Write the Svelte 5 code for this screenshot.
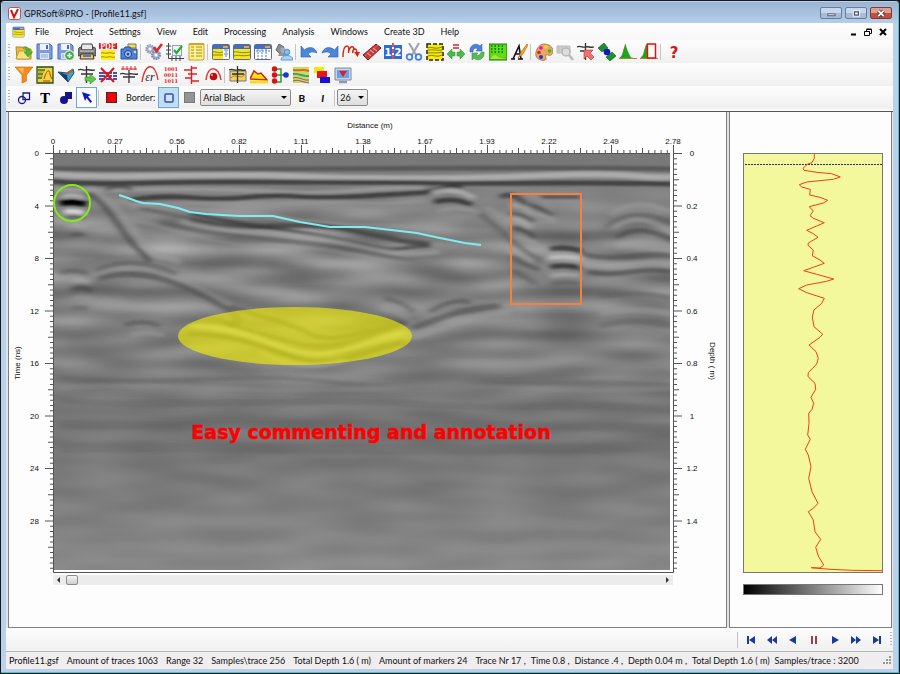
<script>
  const menus = ['File', 'Project', 'Settings', 'View', 'Edit', 'Processing', 'Analysis', 'Windows', 'Create 3D', 'Help'];

  // Shared icon parts, all drawn on an 18 x 18 grid
  const floppy = `<path d="M1 1h13l2 2v13H1z" fill="#7d9be0" stroke="#4a68b8"/><path d="M4 1h9v6H4z" fill="#eef3fc"/><path d="M10 2h2v4h-2z" fill="#4a68b8"/><path d="M4 10h9v6H4z" fill="#dfe8f8"/><path d="M5 12h7M5 14h7" stroke="#8aa3d6"/>`;
  const frame = `<rect x=".5" y="1.500" width="17" height="15" rx="1" fill="#fff" stroke="#5a6a90"/><path d="M1 2h16v4H1z" fill="#3f6ec8"/><path d="M11 3h5v2h-5z" fill="#f2a040"/>`;
  const peak = `<path d="M0 15.500 3 12 5 5 6.500 1 8 6 10 11 12 14.500 17.500 15.500z" fill="#1da51d"/><path d="M0 15.500h18" stroke="#a08a40"/><path d="m6.500 1-3 11" stroke="#8a7a20" stroke-width=".6"/>`;
  const crosshair = `<path d="M0 4c4-2 5 1 8 0s6 1 9 0M3 8h12M8.500 0v17" fill="none" stroke="#333" stroke-width="1.300"/>`;

  const open = `<path d="M1 4h6l2 2h7v10H2z" fill="#e8b93a" stroke="#b48a20"/><path d="m1 16 3-8h13l-3 8z" fill="#fbe38a" stroke="#c9a030"/><path d="M8 4c5-1 7 2 7 5h2.500L13 14 9 9h2.500c0-2-1-4-3.500-5z" fill="#4dbb2f" stroke="#2c8c1c" stroke-width=".5"/>`;
  const saveAs = `${floppy}<circle cx="12.500" cy="12.500" r="4.800" fill="#3cae3c" stroke="#fff"/><path d="M12.500 10v5M10 12.500h5" stroke="#fff" stroke-width="1.600"/>`;
  const print = `<path d="M4 1h10l1 6H3z" fill="#e8e8e8" stroke="#444"/><path d="M0 7c0-2 2-3 3-3l1 3h10l1-3c2 0 3 1 3 3v6H0z" fill="#777" stroke="#222" stroke-width=".6"/><path d="M2 8h14" stroke="#ddd"/><path d="M3 11h12l1 5H2z" fill="#f6c85a" stroke="#333"/><path d="M5 13h8" stroke="#4c78d0" stroke-width="2"/>`;
  const pdf = `<path d="M0 0h18v6H0z" fill="#f01414"/><text x="9" y="6" font-family="Liberation Serif, serif" font-weight="bold" font-size="8" text-anchor="middle" fill="#fff">PDF</text><path d="M2 7h14v10H2z" fill="#ffee1a"/><path d="M2 10c3-1 4 1 7 0s4 1 7 0M2 14c3-1 4 1 7 0s4 1 7 0" fill="none" stroke="#9c9000"/>`;
  const camera = `<path d="M8 1h8v4H8z" fill="#f2dc50" stroke="#777"/><path d="M1 6h3l1-2h5l1 2h6v10H1z" fill="#4c82dc" stroke="#2450a0"/><circle cx="8" cy="11" r="3.500" fill="#a8c8f8" stroke="#1c3c84"/><circle cx="8" cy="11" r="1.500" fill="#234a9c"/><circle cx="15" cy="9" r="1.200" fill="#ffe050"/>`;
  const gears = `<circle cx="5" cy="6" r="3.500" fill="#b8c2dc" stroke="#8d98b8" stroke-width="2.500" stroke-dasharray="1.500 .7"/><circle cx="5" cy="6" r="1.300" fill="#fff"/><circle cx="11" cy="12" r="3.800" fill="#aab6d4" stroke="#7d8ab0" stroke-width="2.500" stroke-dasharray="1.600 .7"/><circle cx="11" cy="12" r="1.500" fill="#fff"/><path d="m9 4 2.500 4L17 1" fill="none" stroke="#d92a2a" stroke-width="2.500"/>`;
  const validate = `<path d="M2.500 0v15.500H18M0 3h5M0 7h5M0 11h5M6 13v5M10 13v5M14 13v5" stroke="#444" fill="none"/><rect x="6.500" y="2.500" width="9" height="10" fill="#eef4ff" stroke="#8fa4c8"/><path d="m8 7 2.500 3L16 3" fill="none" stroke="#26ad26" stroke-width="2.200"/>`;
  const notes = `<path d="M2 1h15v15l-1 1H2z" fill="#fdf08c" stroke="#c8a428"/><path d="M4 4h3M9 4h6M4 7h3M9 7h6M4 10h3M9 10h6M4 13h3M9 13h6" stroke="#a58a20"/><path d="M2 1h15" stroke="#d9a520" stroke-width="2"/>`;
  const traceWindow = `${frame}<path d="M1 6h10v10H1z" fill="#f5e61e"/><path d="M1 9c3-1 5 2 10 0M1 12h10" stroke="#8c8200" fill="none"/><path d="M12 7h4M13 9h2M12 11h4M13 13h2" stroke="#4579d0"/>`;
  const profileWindow = `${frame}<path d="M1 6h16v10H1z" fill="#f5e61e"/><path d="M1 9c4-1 6 2 16 0M1 13c4-2 7 1 16-1" stroke="#8c8200" fill="none"/>`;
  const tableWindow = `${frame}<path d="M2 8h14M4 6v10M8 6v10M12 6v10" stroke="#4579d0" stroke-dasharray="2 1"/>`;
  const users = `<path d="m1 7 3-6 5 3-4 7z" fill="#8a8f96" stroke="#666"/><circle cx="8" cy="7" r="2.500" fill="#a9adb2"/><path d="M3 13c1-5 8-5 9 0z" fill="#92979c"/><circle cx="12" cy="9" r="2.800" fill="#84bff0" stroke="#5090d0"/><path d="M6 17c0-6 12-6 12 0z" fill="#a9d4f8" stroke="#5b9bd8"/>`;
  const undo = `<path d="M1 3v11h10L8 11c3-3 6-2 9-1C15 4 9 3 4.500 7z" fill="#4a86dc" stroke="#2c5fae" stroke-width=".6"/>`;
  const redo = `<path d="M17 3v11H7l3-3C7 8 4 9 1 10c2-6 8-7 12.500-3z" fill="#4a86dc" stroke="#2c5fae" stroke-width=".6"/>`;
  const wave = `<path d="M1 14C1 5 3 3 5 3s2 3 1.500 7C7 5 9 3 11 4s0 4-.5 6C11 5 15 4 15 11" fill="none" stroke="#d8230f" stroke-width="1.400"/><path d="m12 9 3.500 5L18 9z" fill="#d8230f"/>`;
  const ruler = `<path d="m0 12 13-11 5 4L5 17z" fill="#c43c3c" stroke="#7c1c1c"/><path d="m4 10 4 3M7 7l4 3M10 5l4 3" stroke="#f0b8b8"/><path d="m2 13 13-11" stroke="#e88080" stroke-dasharray="1 1"/>`;
  const split = `<path d="M0 2h8v14H0zM10 2h8v14h-8z" fill="#2f6bd8"/><text x="4" y="13" font-family="DejaVu Sans, sans-serif" font-weight="bold" font-size="10" text-anchor="middle" fill="#fff">1</text><text x="14" y="13" font-family="DejaVu Sans, sans-serif" font-weight="bold" font-size="10" text-anchor="middle" fill="#fff">2</text><path d="M9 0v18" stroke="#e01010" stroke-width="1.500" stroke-dasharray="4 2"/>`;
  const cut = `<path d="m4 0 7 12M14 0 7 12" stroke="#9aa2ae" stroke-width="2"/><circle cx="4.500" cy="14" r="2.800" fill="none" stroke="#4b7ee0" stroke-width="1.800"/><circle cx="13.500" cy="14" r="2.800" fill="none" stroke="#4b7ee0" stroke-width="1.800"/>`;
  const region = `<path d="M1 1h16v16H1z" fill="#f6ea10" stroke="#222" stroke-width="1.500" stroke-dasharray="4 2"/><path d="M2 5c4-2 6 2 14-1M2 7c4-1 8 1 14 0M2 10c4-1 8 1 14-1M2 13c5-2 8 2 14-1" fill="none" stroke="#8a8000"/>`;
  const stretch = `<path d="M6 2h6M6 5h6" stroke="#e02020" stroke-width="1.500"/><path d="m0 11 5-5v3h3v4H5v3zM18 11l-5-5v3h-3v4h3v3z" fill="#4cb848" stroke="#2f8a2c" stroke-width=".5"/>`;
  const sync = `<path d="M2 9C1 2 8-1 12 3l2-2v7H8l2-2C7 4 5 6 5 9z" fill="#4a84e0" stroke="#2a58a8" stroke-width=".5"/><path d="M16 9c1 7-6 10-10 6l-2 2v-7h6l-2 2c3 1 5-1 5-3z" fill="#58bd50" stroke="#2f8030" stroke-width=".5"/>`;
  const green = `<path d="M0 1h18v16H0z" fill="#58e010" stroke="#207010"/><path d="M2 3h14M2 6h14M2 9h14" stroke="#135c08" stroke-width="1.500" stroke-dasharray="1.500 2"/><path d="M1 16c3-6 6-5 8-3s5 1 8 3" stroke="#c0a000" fill="#8cf040"/>`;
  const annotate = `<path d="M1 16h4m3 0h5M3 16 9 3l2 13M5 11h5" stroke="#111" fill="none" stroke-width="1.600"/><path d="m17 1-6 8-3 6 5-4 5-9z" fill="#f0a030" stroke="#b06a10" stroke-width=".6"/>`;
  const palette = `<path d="M9 1c5 0 9 3 9 7s-3 5-5 4-3 1-2 3-2 3-5 2C2 16 0 13 1 9s4-8 8-8z" fill="#e9a862" stroke="#9c5c20" stroke-width=".7"/><circle cx="6" cy="5" r="1.800" fill="#e010d0"/><circle cx="11" cy="4" r="1.800" fill="#f0e020"/><circle cx="14.500" cy="8" r="1.800" fill="#20c030"/><circle cx="4" cy="9.500" r="1.800" fill="#e02020"/><circle cx="6" cy="14" r="2" fill="#2030e0"/>`;
  const zoom = `<path d="M1 3h13v7H1zM3 3v7M6 3v7" fill="#d0d0d0" stroke="#bbb"/><circle cx="10" cy="9" r="4" fill="#ddd" stroke="#b8b8b8" stroke-width="1.500"/><path d="m13 12 4 5" stroke="#b8b8b8" stroke-width="2.500"/>`;
  const pick = `${crosshair}<path d="M7 7h9l-3 3 4 4-3 3-4-4-3 3z" fill="#f07070" stroke="#c03030" stroke-width=".6"/>`;
  const satellite = `<path d="m0 5 6-5 4 5-6 4zM8 14l6-5 4 4-6 5z" fill="#1d8f2c" stroke="#0c6018" stroke-width=".6"/><circle cx="9" cy="9" r="3.300" fill="#1414c0"/>`;
  const peakWindow = `${peak}<rect x="7.500" y="1" width="8" height="14" fill="#fff" stroke="#e81010" stroke-width="1.500"/>`;
  const help = `<text x="9" y="15" font-family="DejaVu Sans, sans-serif" font-weight="bold" font-size="15" text-anchor="middle" fill="#d81414">?</text>`;

  const funnel = `<path d="M0 1h18l-6.500 8v6L7 17V9z" fill="#f5891c" stroke="#c96a08" stroke-width=".6"/><path d="M3 2h6L8 8z" fill="#ffb85a"/>`;
  const gain = `<path d="M1 1h16v16H1z" fill="#f2d43a" stroke="#2c4a1c" stroke-width="1.300"/><path d="M2 4h7M2 8h5M2 12h4" stroke="#188038" stroke-width="1.500"/><path d="M2 6h6M2 10h5" stroke="#e07020"/><path d="M8 13c2-7 4-9 5-8s1 5 3 8M7 15h7" fill="none" stroke="#a04a10"/>`;
  const plane = `<path d="m1 6 9 1 6-4 1 4-6 9z" fill="#3aa2d4" stroke="#245070"/><path d="m2 6 8 3 1 7z" fill="#173c74"/><path d="m9 8 7-4" stroke="#9c6a30" stroke-width="2.500"/>`;
  const shift = `${crosshair}<path d="M7 11h5V8l6 5-6 5v-3H7z" fill="#5fca4f" stroke="#328a28" stroke-width=".6"/>`;
  const remove = `<path d="M0 7h18M0 10h18M0 13h18" stroke="#14149c" stroke-width="1.600" stroke-dasharray="6 1"/><path d="m2 2 13 14M15 2 2 16" stroke="#e01818" stroke-width="2"/>`;
  const align = `<path d="M1 3h16M3 0v4M7 0v4M11 0v4M15 0v4" stroke="#e02020"/><path d="M0 8c4-2 5 1 8 0s6 1 10 0M3 11h12M9 4v13" fill="none" stroke="#333" stroke-width="1.300"/>`;
  const permittivity = `<path d="M1 16C4-4 14-4 17 14" fill="none" stroke="#e03030" stroke-width="1.300"/><text x="9" y="15" font-family="Liberation Serif, serif" font-style="italic" font-size="12" text-anchor="middle" fill="#222">εr</text>`;
  const binary = `<g font-family="DejaVu Serif, serif" font-weight="bold" font-size="5" text-anchor="middle" fill="#e01414"><text x="9" y="5">1001</text><text x="9" y="11">0011</text><text x="9" y="17">1011</text></g>`;
  const levels = `<path d="M8.500 0v18M1 4h7M5 8h9M2 12h7M8 15h8M8 2h6" stroke="#e02020" stroke-width="1.400" fill="none"/>`;
  const target = `<path d="M2 14C3-1 15-1 17 14" fill="none" stroke="#e04040" stroke-width="1.500"/><circle cx="9.500" cy="10.500" r="3.800" fill="#c40808"/><circle cx="8" cy="9" r="1.200" fill="#f08080"/>`;
  const section = `<path d="M1 5h16v10H1z" fill="#f0d060" stroke="#777"/><path d="M2 12c4-6 10 3 14-4" stroke="#b08020" fill="none"/>${crosshair}`;
  const terrain = `<path d="m0 13 4-8 4 3 3-1 6 7z" fill="#fbe81a" stroke="#d82010" stroke-width="1.500"/><path d="M0 16h18" stroke="#f0e020" stroke-width="3"/>`;
  const tree = `<path d="M5 3h5v13H5M5 9h9" fill="none" stroke="#2f9a2f" stroke-width="1.500"/><circle cx="3.500" cy="3" r="2.700" fill="#e01010"/><circle cx="3.500" cy="9" r="2.700" fill="#e01010"/><circle cx="3.500" cy="15" r="2.700" fill="#e01010"/><circle cx="15" cy="9" r="2.800" fill="#1838d0"/>`;
  const layers = `<path d="M1 1h16v16H1z" fill="#c8e050"/><path d="M1 4c6 1 10-1 16 1" stroke="#e06030" stroke-width="2" fill="none"/><path d="M1 8c6-1 10 3 16 2" stroke="#2f9c8c" stroke-width="2" fill="none"/><path d="M1 12c6-2 10 3 16 2M1 15c6-2 8 1 16 2" stroke="#a04898" fill="none"/>`;
  const slices = `<path d="M1 1h10v6H1z" fill="#f6e800"/><path d="M4 5h10v7H4z" fill="#e81414"/><path d="M7 11h10v6H7z" fill="#1414d8"/>`;
  const monitor = `<path d="M1 2h16v12H1z" fill="#c9d3e2" stroke="#7c8aa2"/><path d="M3 4h12v8H3z" fill="#6aa0ee"/><path d="m5 5 4 6 4-6z" fill="#e02020"/><path d="M5 16h8" stroke="#8a98b0" stroke-width="2.500"/>`;

  const mainBar = [
    [['Open', open], ['Save', floppy], ['Save as', saveAs], ['Print', print], ['Export PDF', pdf], ['Snapshot', camera]],
    [['Preferences', gears], ['Validate', validate], ['Notes', notes]],
    [['Trace window', traceWindow], ['Profile window', profileWindow], ['Table window', tableWindow], ['Users', users]],
    [['Undo', undo], ['Redo', redo], ['Wavelet', wave], ['Measure', ruler], ['Split', split], ['Cut', cut], ['Select region', region], ['Stretch', stretch], ['Reverse', sync], ['Surface', green], ['Annotate', annotate]],
    [['Palette', palette], ['Zoom', zoom], ['Pick', pick], ['GPS', satellite], ['Spectrum', peak], ['Spectrum window', peakWindow]],
    [['Help topics', help]]
  ];

  const processBar = [
    [['Filter', funnel], ['Gain', gain], ['Migration', plane], ['Time shift', shift], ['Remove traces', remove], ['Align', align], ['Permittivity', permittivity], ['Binary', binary], ['Levels', levels], ['Target', target]],
    [['Section', section], ['Terrain', terrain], ['Process tree', tree], ['Layers', layers], ['Slices', slices], ['Display', monitor]]
  ];

  const drawTools = [
    ['Shapes', `<g fill="none" stroke="#1c1c84" stroke-width="1.300"><circle cx="7" cy="11" r="3.500"/><path d="M8 7V4h6.500v6.500H10"/><path d="M8 7.500v3h3"/></g>`],
    ['Text', `<text x="9" y="14" font-family="DejaVu Serif, serif" font-weight="bold" font-size="13" text-anchor="middle" fill="#000">T</text>`],
    ['Filled shapes', `<circle cx="7" cy="11" r="4" fill="#141488"/><path d="M8 3h7v7H8z" fill="#141488"/>`],
    ['Pointer', `<path d="m4 3 9 3-3 1.500 4 5-1.500 1.500-4-5L7 12z" fill="#1414c8"/>`]
  ];

  const player = [
    ['First', '<path d="M5 5h2v8H5zM13 5v8L7 9z"/>'],
    ['Rewind', '<path d="M9 5v8L4 9zM14 5v8L9 9z"/>'],
    ['Step back', '<path d="M12 5v8L5 9z"/>'],
    ['Pause', '<path d="M6 5h2v8H6zM10 5h2v8h-2z" fill="#a04040"/>'],
    ['Play', '<path d="M6 5v8l7-4z"/>'],
    ['Forward', '<path d="M4 5v8l5-4zM9 5v8l5-4z"/>'],
    ['Last', '<path d="M5 5v8l6-4zM11 5h2v8h-2z"/>']
  ];

  const distances = ['0', '0.27', '0.56', '0.82', '1.11', '1.38', '1.67', '1.93', '2.22', '2.49', '2.78'];
  const times = ['0', '4', '8', '12', '16', '20', '24', '28'];
  const depths = ['0', '0.2', '0.4', '0.6', '0.8', '1', '1.2', '1.4'];

  const tick = (i) => (i % 10 === 0 ? 8 : i % 5 === 0 ? 5 : 3);
  const topTicks = Array.from({ length: 101 }, (_, i) => `M${53.5 + i * 6.2} 153v${-tick(i)}`).join('');
  const leftTicks = Array.from({ length: 80 }, (_, i) => `M53 ${153.5 + i * 5.25}h${-tick(i)}`).join('');
  const rightTicks = Array.from({ length: 80 }, (_, i) => `M674 ${153.5 + i * 5.25}h${tick(i)}`).join('');

  // Reflectors in the radargram: path, grey level, width, opacity
  const reflectors = [
    ['M50 160H674', 120, 14, 0.7],
    ['M50 168.500C200 171 500 166 674 169', 84, 5, 0.9],
    ['M50 174C120 180 200 172 290 176S480 178 560 175 630 179 674 177', 176, 6, 0.9],
    ['M50 181C90 186 150 182 200 182S400 182 440 183 580 182 674 184', 62, 5, 0.95],
    ['M54 189C110 193 180 186 260 191S370 186 425 188', 160, 4, 0.7],
    ['M130 200C180 192 200 202 240 198S290 196 310 197 370 196 415 193 440 183 462 187', 55, 5, 0.85],
    ['M130 206C190 200 250 206 300 203S380 207 425 200', 150, 4, 0.65],
    ['M432 193Q455 186 474 198', 180, 5, 0.8],
    ['M434 202Q455 197 472 205', 50, 5, 0.85],
    ['M438 211Q458 205 478 212', 155, 4, 0.6],
    ['M88 188C104 194 120 210 140 238S160 250 180 263', 156, 6, 0.6],
    ['M88 193C106 202 114 220 128 238S142 250 150 262', 66, 5, 0.75],
    ['M105 190Q120 183 132 190', 72, 4, 0.7],
    ['M54 190H88', 155, 5, 0.6],
    ['M62 197Q73 193 84 198', 180, 4, 0.9],
    ['M60 203Q74 201 86 204', 4, 6, 1],
    ['M64 212Q74 210 84 213', 215, 5, 0.95],
    ['M66 218Q75 216 84 218', 75, 4, 0.6],
    ['M68 226Q78 224 86 227', 165, 5, 0.6],
    ['M70 236Q78 232 84 236', 72, 4, 0.6],
    ['M120 200C170 212 220 208 280 218S360 224 420 228', 155, 5, 0.45],
    ['M140 208C180 216 220 227 280 224S360 236 395 236', 90, 4, 0.6],
    ['M190 220C250 236 290 218 350 230S390 240 430 244', 70, 5, 0.85],
    ['M190 213C250 228 290 228 350 242S390 246 430 246', 52, 4, 0.6],
    ['M180 221C230 235 290 231 340 242S400 256 440 252', 162, 5, 0.6],
    ['M160 222C210 236 270 238 330 246S380 258 420 262', 90, 5, 0.6],
    ['M130 219C170 228 220 248 280 247S360 262 420 262', 148, 4, 0.45],
    ['M96 277Q135 256 190 284T240 312', 150, 6, 0.45],
    ['M98 279Q140 264 200 294T226 325', 82, 6, 0.65],
    ['M96 270Q134 254 176 274', 88, 5, 0.5],
    ['M72 281Q82 278 90 283', 176, 5, 0.55],
    ['M72 290Q82 285 92 291', 70, 5, 0.7],
    ['M72 299Q82 295 92 299', 150, 5, 0.5],
    ['M60 273Q76 268 88 274', 92, 5, 0.6],
    ['M72 308H88', 92, 5, 0.5],
    ['M124 325Q145 319 160 326', 85, 5, 0.6],
    ['M130 335Q150 330 164 336', 155, 5, 0.5],
    ['M230 306C260 318 290 322 310 334S380 328 412 320', 80, 5, 0.6],
    ['M190 326C240 326 270 346 300 352S350 348 405 332', 180, 5, 0.75],
    ['M188 334C240 334 270 350 300 359S360 352 405 342', 84, 5, 0.75],
    ['M210 318C250 330 270 338 300 344S360 340 400 325', 92, 4, 0.7],
    ['M260 352Q300 374 345 360', 165, 5, 0.6],
    ['M412 328C440 320 450 310 500 306', 86, 6, 0.65],
    ['M412 337C440 332 460 316 510 312', 155, 6, 0.55],
    ['M380 308Q400 310 414 324', 158, 6, 0.5],
    ['M384 298Q404 302 414 312', 88, 5, 0.5],
    ['M430 312Q450 298 470 302', 70, 5, 0.5],
    ['M480 214C500 228 515 246 540 262', 78, 5, 0.55],
    ['M486 207C505 218 525 236 545 250', 155, 5, 0.55],
    ['M500 197Q515 190 526 206', 62, 5, 0.8],
    ['M510 205Q522 204 532 214', 170, 5, 0.7],
    ['M510 214Q524 214 534 222', 80, 5, 0.7],
    ['M512 217Q526 222 530 228', 175, 5, 0.7],
    ['M512 227Q526 230 534 238', 66, 5, 0.75],
    ['M512 236Q526 238 536 246', 160, 5, 0.6],
    ['M512 250Q524 256 534 262', 170, 5, 0.6],
    ['M512 256Q522 264 540 270', 75, 5, 0.6],
    ['M512 270Q524 276 536 284', 85, 5, 0.6],
    ['M528 194Q540 198 552 208', 150, 4, 0.6],
    ['M530 205Q542 208 552 216', 65, 4, 0.7],
    ['M534 214Q546 214 554 222', 165, 4, 0.6],
    ['M540 197H580', 68, 4, 0.65],
    ['M550 249Q566 246 582 251', 58, 5, 0.9],
    ['M548 258Q566 255 582 259', 190, 5, 0.9],
    ['M550 267Q566 264 580 268', 52, 5, 0.9],
    ['M550 276Q566 273 580 276', 172, 5, 0.7],
    ['M552 284Q566 281 580 284', 90, 4, 0.6],
    ['M610 215Q636 195 670 212', 160, 5, 0.45],
    ['M606 228Q636 204 672 224', 82, 5, 0.45],
    ['M612 229Q636 209 672 232', 165, 5, 0.5],
    ['M616 238Q638 222 672 240', 72, 5, 0.65],
    ['M618 247Q640 236 672 247', 158, 5, 0.5],
    ['M582 254C620 264 640 250 672 256', 80, 5, 0.6],
    ['M582 264C620 270 640 258 672 264', 165, 5, 0.55],
    ['M588 272C620 278 640 266 672 272', 74, 5, 0.65],
    ['M600 296Q636 290 672 298', 92, 5, 0.45],
    ['M600 314Q636 306 672 314', 155, 6, 0.45],
    ['M600 326Q636 316 672 326', 96, 6, 0.5],
    ['M60 378C160 388 240 370 330 382S560 376 672 386', 95, 5, 0.35],
    ['M60 388C160 380 260 396 380 388S560 396 672 388', 150, 5, 0.3],
    ['M60 400C160 410 300 396 420 404S560 400 672 410', 100, 7, 0.35],
    ['M60 424C160 428 300 420 672 428', 96, 9, 0.25],
    ['M60 448C200 444 400 454 672 446', 96, 10, 0.3]
  ];

  // Amplitude and time of the current trace, three units to a pixel
  const samples = [
    [643, 130], [643, 145], [636, 158], [622, 163], [609, 175], [612, 181], [650, 187], [695, 191], [721, 201], [700, 208],
    [620, 216], [598, 224], [605, 231], [631, 238], [629, 255], [660, 262], [683, 271], [670, 279], [628, 290], [640, 303],
    [630, 317], [640, 325], [673, 338], [650, 348], [620, 361], [640, 371], [654, 382], [625, 399], [624, 406], [640, 420],
    [637, 437], [660, 450], [673, 460], [640, 472], [611, 482], [650, 493], [701, 507], [680, 514], [620, 525], [596, 536],
    [620, 548], [673, 565], [665, 580], [642, 600], [637, 620], [642, 650], [668, 673], [660, 682], [627, 705], [648, 725],
    [655, 745], [650, 762], [625, 788], [624, 800], [645, 820], [647, 838], [633, 862], [641, 880], [636, 898], [626, 910],
    [627, 940], [623, 975], [631, 988], [616, 1018], [625, 1035], [633, 1070], [626, 1105], [636, 1145], [654, 1180], [640, 1195],
    [625, 1205], [640, 1230], [645, 1265], [662, 1288], [647, 1312], [655, 1338], [671, 1365], [660, 1374], [634, 1373], [690, 1378],
    [755, 1381], [847, 1382]
  ];
  const trace = samples.map(([a, t]) => `${(600 + a / 3).toFixed(1)},${(110 + t / 3).toFixed(1)}`).join(' ');

  const fileStatus = ['Profile11.gsf', 'Amount of traces 1063', 'Range 32', 'Samples\\trace 256', 'Total Depth 1.6 ( m)', 'Amount of markers 24'];
  const traceStatus = ['Trace Nr 17 ,', 'Time 0.8 ,', 'Distance .4 ,', 'Depth 0.04 m ,', 'Total Depth 1.6 ( m)', 'Samples/trace : 3200'];

  let tool = $state('Pointer');
  let border = $state(true);
  let font = $state('Arial Black');
  let size = $state('26');
</script>

{#snippet bar(groups, name)}
  <div class="toolbar" role="toolbar" aria-label={name}>
    <span class="grip"></span>
    {#each groups as group, i}
      {#if i > 0}<span class="sep"></span>{/if}
      {#each group as [label, icon]}
        <button class="tool" aria-label={label}><svg viewBox="0 0 18 18">{@html icon}</svg></button>
      {/each}
    {/each}
  </div>
{/snippet}

<div class="window">
  <header class="titlebar">
    <svg class="logo" viewBox="0 0 13 13">
      <rect x=".5" y=".5" width="12" height="12" rx="2" fill="#fff" stroke="#c05048" />
      <path d="m3 3 3 7 4-8" fill="none" stroke="#c81818" stroke-width="2" />
    </svg>
    <h1>GPRSoft®PRO - [Profile11.gsf]</h1>
    <div class="caption">
      <button aria-label="Minimize"><svg viewBox="0 0 22 12"><rect x="7.500" y="6.500" width="8" height="2" fill="#fff" stroke="#556" /></svg></button>
      <button aria-label="Maximize"><svg viewBox="0 0 22 12"><rect x="8" y="3" width="7" height="6" fill="#556" stroke="#fff" /><path d="M10 5h3v2h-3z" fill="#fff" /></svg></button>
      <button class="close" aria-label="Close"><svg viewBox="0 0 22 12"><path d="m8 3 6 6M14 3 8 9" stroke="#533" stroke-width="4" /><path d="m8 3 6 6M14 3 8 9" stroke="#fff" stroke-width="2" /></svg></button>
    </div>
  </header>

  <div class="client">
    <nav class="menubar">
      <svg class="doc" viewBox="0 0 18 18">{@html profileWindow}</svg>
      {#each menus as menu}
        <button>{menu}</button>
      {/each}
      <div class="mdi">
        <button aria-label="Minimize document"><svg viewBox="0 0 8 8"><path d="M2 6.500h5" stroke="#000" stroke-width="2" /></svg></button>
        <button aria-label="Restore document"><svg viewBox="0 0 8 8"><path d="M2.500 3V1.500h5v4H6M.500 3.500h5v4h-5zM2.500 1h5M.500 3.500h5" fill="none" stroke="#000" /></svg></button>
        <button aria-label="Close document"><svg viewBox="0 0 8 8"><path d="m1 1 6 6M7 1 1 7" stroke="#000" stroke-width="2" /></svg></button>
      </div>
    </nav>

    {@render bar(mainBar, 'Main')}
    {@render bar(processBar, 'Processing')}

    <div class="toolbar" role="toolbar" aria-label="Drawing">
      <span class="grip"></span>
      {#each drawTools as [label, icon]}
        <button class="tool" class:active={tool === label} aria-label={label} onclick={() => (tool = label)}>
          <svg viewBox="0 0 18 18">{@html icon}</svg>
        </button>
      {/each}
      <span class="sep"></span>
      <button class="tool" aria-label="Colour"><span class="swatch red"></span></button>
      <span class="caption-text">Border:</span>
      <button class="tool pressed" aria-label="Border" aria-pressed={border} onclick={() => (border = !border)}>
        <svg viewBox="0 0 18 18"><rect x="5" y="5" width="8" height="8" rx="1" fill="#cfe4f6" stroke="#3c4cac" stroke-width="1.500" /></svg>
      </button>
      <button class="tool" aria-label="Border colour"><span class="swatch grey"></span></button>
      <label class="combo family">
        <select aria-label="Font" bind:value={font}>
          <option>Arial Black</option>
          <option>Arial</option>
        </select>
      </label>
      <button class="tool letter" aria-label="Bold">B</button>
      <button class="tool letter italic" aria-label="Italic">I</button>
      <span class="sep"></span>
      <label class="combo">
        <select aria-label="Font size" bind:value={size}>
          <option>26</option>
          <option>28</option>
        </select>
      </label>
    </div>

    <main>
      <section class="panel profile">
        <svg class="chart" viewBox="9 112 717 462" role="img" aria-label="Radargram">
          <defs>
            <linearGradient id="ground" x1="0" y1="0" x2="0" y2="1">
              <stop offset="0" stop-color="#7c7c7c" />
              <stop offset=".15" stop-color="#858585" />
              <stop offset=".5" stop-color="#7e7e7e" />
              <stop offset=".66" stop-color="#727272" />
              <stop offset=".8" stop-color="#7b7b7b" />
              <stop offset="1" stop-color="#8a8a8a" />
            </linearGradient>
            <linearGradient id="fade" x1="0" y1="0" x2="0" y2="1">
              <stop offset=".08" stop-color="#222" />
              <stop offset=".2" stop-color="#fff" />
              <stop offset=".45" stop-color="#bbb" />
              <stop offset=".6" stop-color="#555" />
              <stop offset="1" stop-color="#333" />
            </linearGradient>
            <mask id="depth"><rect x="53" y="153" width="618" height="418" fill="url(#fade)" /></mask>
            <clipPath id="scan"><rect x="53" y="153" width="617" height="417" /></clipPath>
            <filter id="noise" x="0" y="0" width="1" height="1" color-interpolation-filters="sRGB">
              <feTurbulence type="fractalNoise" baseFrequency="0.015 0.07" numOctaves="1" seed="11" />
              <feColorMatrix values="1.3 0 0 0 -0.13  1.3 0 0 0 -0.13  1.3 0 0 0 -0.13  0 0 0 0 0.38" />
            </filter>
            <filter id="soften" x="-5%" y="-5%" width="110%" height="110%"><feGaussianBlur stdDeviation="3 1.300" /></filter>
          </defs>

          <g clip-path="url(#scan)">
            <rect x="53" y="153" width="618" height="418" fill="url(#ground)" />
            <g mask="url(#depth)"><rect x="53" y="153" width="618" height="418" filter="url(#noise)" /></g>
            <g filter="url(#soften)" fill="none">
              {#each reflectors as [d, level, width, opacity]}
                <path {d} stroke="rgb({level},{level},{level})" stroke-width={width} stroke-opacity={opacity} />
              {/each}
            </g>
          </g>
          <path d="M53.500 145V572.500H673.500V145" class="axis" />
          <path d="M53 153.500H670" class="axis" />
          <path d={topTicks} class="ticks" />
          <path d={leftTicks} class="ticks" />
          <path d={rightTicks} class="ticks" />

          <ellipse cx="295" cy="336" rx="117" ry="29" fill="#f8f400" fill-opacity=".6" />
          <circle cx="72" cy="203" r="18" fill="none" stroke="#80ea18" stroke-width="2" />
          <rect x="511" y="194" width="70" height="110" fill="none" stroke="#f58040" stroke-width="2" />
          <polyline
            points="119,195 128,198 136,201 143,203 160,204 178,208 190,212 206,214 240,216 273,216 300,222 330,227 365,227 400,231 417,233 440,238 465,243 481,245"
            fill="none" stroke="#80ecf0" stroke-width="2" />
          <text x="371" y="439" text-anchor="middle" class="note">Easy commenting and annotation</text>

          {#each distances as label, i}
            <text x={53 + i * 62} y="144" text-anchor="middle">{label}</text>
          {/each}
          {#each times as label, i}
            <text x="39" y={156 + i * 52.5} text-anchor="end">{label}</text>
          {/each}
          {#each depths as label, i}
            <text x="692" y={156 + i * 52.5} text-anchor="middle">{label}</text>
          {/each}
          <text x="370" y="128" text-anchor="middle">Distance (m)</text>
          <text transform="translate(20 363) rotate(-90)" text-anchor="middle">Time (ns)</text>
          <text transform="translate(710 361) rotate(90)" text-anchor="middle">Depth ( m)</text>
        </svg>

        <div class="scroll">
          <button aria-label="Scroll left"><svg viewBox="0 0 11 10"><path d="M7 2v6L4 5z" /></svg></button>
          <span class="thumb"></span>
          <button aria-label="Scroll right"><svg viewBox="0 0 11 10"><path d="M4 2v6l3-3z" /></svg></button>
        </div>
      </section>

      <section class="panel wiggle">
        <svg class="chart" viewBox="730 112 161 486" role="img" aria-label="Trace amplitude">
          <defs>
            <linearGradient id="scale">
              <stop offset="0" stop-color="#000" />
              <stop offset="1" stop-color="#fff" />
            </linearGradient>
          </defs>
          <rect x="743.500" y="153.500" width="139" height="419" fill="#f4f89c" stroke="#777" />
          <path d="M745 164.500H882" stroke="#28286c" stroke-dasharray="2 1" />
          <polyline points={trace} fill="none" stroke="#f03c20" />
          <rect x="743.500" y="584.500" width="139" height="10" fill="url(#scale)" stroke="#777" />
        </svg>
      </section>
    </main>

    <div class="toolbar player" role="toolbar" aria-label="Playback">
      <span class="sep"></span>
      {#each player as [label, icon]}
        <button class="tool" aria-label={label}><svg viewBox="0 0 18 18" fill="#1c3a9c">{@html icon}</svg></button>
      {/each}
      <span class="grip"></span>
    </div>

    <footer>
      <div class="status">
        {#each fileStatus as text}<span>{text}</span>{/each}
      </div>
      <div class="status tight">
        {#each traceStatus as text}<span>{text}</span>{/each}
      </div>
      <svg class="resize" viewBox="0 0 9 9"><path d="M7 1h2M4 4h2M7 4h2M1 7h2M4 7h2M7 7h2" stroke="#999" stroke-width="2" /></svg>
    </footer>
  </div>
</div>

<style>
  :global(body) {
    margin: 0;
    background: #111;
  }

  .window {
    box-sizing: border-box;
    display: flex;
    flex-direction: column;
    min-height: 100vh;
    padding: 1px 6px 4px 5px;
    border: 1px solid #16181c;
    border-radius: 4px 4px 0 0;
    background: #b9d1ea;
    box-shadow: inset -1px -1px 0 #48c4d8;
    font-family: Lato, 'Open Sans', sans-serif;
    font-size: 9px;
    color: #111;
  }

  button {
    padding: 0;
    border: 0;
    background: none;
    font: inherit;
    color: inherit;
  }

  svg {
    display: block;
  }

  .titlebar {
    display: flex;
    align-items: center;
    gap: 3px;
    height: 20px;
    margin: 0 -5px 0 -4px;
    padding: 1px 2px 0 6px;
    background: linear-gradient(#9ab4d3, #b5cee9);
  }

  .logo {
    width: 13px;
    height: 13px;
  }

  h1 {
    margin: 0;
    font-size: 9px;
    font-weight: 400;
  }

  .caption {
    display: flex;
    gap: 3px;
    margin-left: auto;
    padding-right: 4px;
  }

  .caption button {
    width: 22px;
    border: 1px solid #6a7e9a;
    border-radius: 2px;
    background: linear-gradient(#c6d8ec 50%, #a4bcd8 50%);
  }

  .caption .close {
    border-color: #7a3c38;
    background: linear-gradient(#e0a090 50%, #c05040 50%);
  }

  .client {
    display: flex;
    flex: 1;
    flex-direction: column;
    background: #fbfbfb;
  }

  .menubar {
    display: flex;
    align-items: center;
    height: 17px;
    padding: 0 6px;
    background: linear-gradient(#fefefe, #f7f7f7);
  }

  .menubar > button {
    padding: 0 8px;
  }

  .doc {
    width: 13px;
    height: 12px;
    margin-right: 2px;
  }

  .mdi {
    display: flex;
    gap: 7px;
    margin-left: auto;
  }

  .mdi svg {
    width: 8px;
  }

  .toolbar {
    display: flex;
    align-items: center;
    height: 23px;
    padding-left: 2px;
    background: linear-gradient(#fdfdfd, #f0f0f0);
  }

  .grip {
    width: 2px;
    height: 15px;
    margin-right: 3px;
    background: repeating-linear-gradient(#b4b4b4 0 1px, transparent 1px 3px);
  }

  .sep {
    width: 1px;
    height: 16px;
    margin: 0 2px 0 1px;
    background: #c4c4c4;
  }

  .tool {
    display: flex;
    align-items: center;
    justify-content: center;
    flex: none;
    box-sizing: border-box;
    width: 21px;
    height: 21px;
  }

  .tool svg {
    flex: none;
    width: 18px;
    height: 18px;
  }

  .active {
    border: 1px solid #66a8e0;
    background: #fafdff;
  }

  .pressed {
    border: 1px solid #66a8e0;
    background: #c2dff2;
  }

  .swatch {
    box-sizing: border-box;
    width: 11px;
    height: 11px;
    border: 1px solid #333;
  }

  .red {
    background: #f80000;
  }

  .grey {
    border-color: #777;
    background: #949494;
  }

  .caption-text {
    padding: 0 3px 0 4px;
  }

  .combo {
    position: relative;
  }

  .combo::after {
    position: absolute;
    top: 7px;
    right: 4px;
    border: 3px solid transparent;
    border-top-color: #000;
    content: '';
    pointer-events: none;
  }

  .combo select {
    width: 31px;
    height: 17px;
    padding: 0 2px;
    border: 1px solid #8a8a8a;
    border-radius: 2px;
    background: linear-gradient(#f4f4f4, #dedede);
    font: inherit;
    color: #111;
    appearance: none;
  }

  .family select {
    width: 91px;
  }

  .letter {
    font-size: 10px;
    font-weight: 900;
  }

  .italic {
    font-style: italic;
  }

  main {
    display: flex;
    flex: 1;
    gap: 2px;
    margin-top: 2px;
    padding: 0 1px 0 2px;
    border-top: 1px solid #555;
    background: #e4e4e4;
  }

  .panel {
    display: flex;
    flex-direction: column;
    min-width: 0;
    border: 1px solid #808080;
    border-top: 0;
    background: #fdfdfd;
  }

  .profile {
    flex: 717;
  }

  .wiggle {
    flex: 161;
  }

  .chart {
    width: 100%;
    font-family: 'Liberation Sans', Arial, sans-serif;
    font-size: 8px;
    fill: #111;
  }

  .axis,
  .ticks {
    fill: none;
    stroke: #555;
  }

  .note {
    font-family: 'Arial Black', 'DejaVu Sans', sans-serif;
    font-size: 19px;
    font-weight: 900;
    fill: #f00;
    stroke: #f00;
    stroke-width: 1px;
    stroke-opacity: 0.5;
  }

  .scroll {
    display: flex;
    margin: 1px 53px 0 44px;
    background: #ececec;
  }

  .scroll svg {
    width: 11px;
    fill: #333;
  }

  .scroll button:last-child {
    margin-left: auto;
  }

  .thumb {
    box-sizing: border-box;
    width: 12px;
    margin-left: 2px;
    border: 1px solid #8c8c8c;
    border-radius: 2px;
    background: linear-gradient(#f4f4f4, #cfcfcf);
  }

  .player {
    justify-content: flex-end;
    padding: 0 1px 0 0;
  }

  .player .grip {
    margin: 0 0 0 3px;
  }

  footer {
    display: flex;
    align-items: center;
    height: 17px;
    padding: 0 2px 0 3px;
    border-top: 1px solid #b4b8b4;
    background: #efeded;
    white-space: pre;
  }

  .status {
    display: flex;
    gap: 8px;
  }

  .tight {
    gap: 5px;
    margin-left: 8px;
  }

  .resize {
    width: 9px;
    height: 9px;
    margin-left: auto;
  }
</style>
